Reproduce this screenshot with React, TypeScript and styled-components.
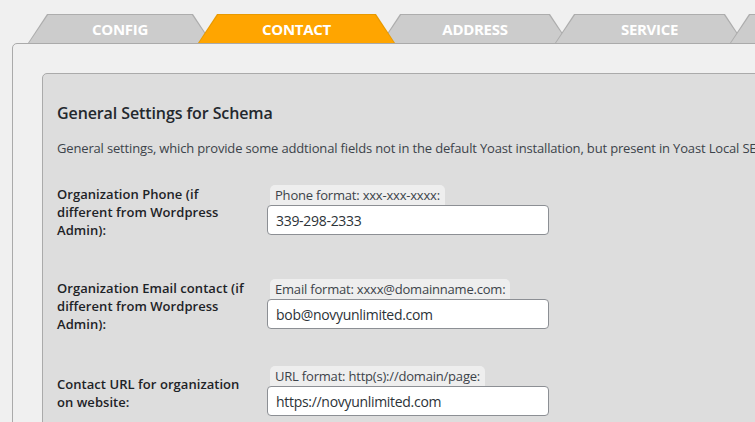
import React from "react";
import styled, { createGlobalStyle } from "styled-components";

const Global = createGlobalStyle`
  html, body { margin: 0; padding: 0; background: #f0f0f0; overflow: hidden; }
  body { font-family: "Open Sans", "Noto Sans", sans-serif; color: #1d2327; }
  * { box-sizing: border-box; }
`;

const Page = styled.div`
  width: 755px;
  height: 422px;
  overflow: hidden;
  padding: 14px 0 0 12px;
`;

const TabBar = styled.div`
  display: flex;
  padding-left: 16px;
  height: 29px;
`;

const Tab = styled.div<{ $w: number; $active?: boolean }>`
  position: relative;
  z-index: ${(p) => (p.$active ? 5 : 1)};
  flex: none;
  width: ${(p) => p.$w}px;
  height: 29px;
  margin-left: -14px;
  &:first-child { margin-left: 0; }
  display: flex;
  align-items: center;
  justify-content: center;
  padding-top: 1px;
  font-family: "Open Sans", sans-serif;
  font-weight: 700;
  font-size: 15px;
  letter-spacing: -0.3px;
  color: #ffffff;
  &::before, &::after {
    content: "";
    position: absolute;
    z-index: -1;
    clip-path: polygon(0 100%, 19px 0, calc(100% - 19px) 0, 100% 100%);
  }
  &::before {
    inset: 0;
    background: ${(p) => (p.$active ? "#e89a00" : "#adadad")};
  }
  &::after {
    top: 1px;
    bottom: 0;
    left: 1px;
    right: 1px;
    background: ${(p) => (p.$active ? "#ffa500" : "#cccccc")};
  }
`;

const Panel = styled.div`
  width: 900px;
  height: 420px;
  background: #f0f0f0;
  border: 1px solid #aaaaaa;
  border-radius: 5px 0 0 0;
  padding: 29px 0 0 29px;
`;

const Box = styled.div`
  width: 860px;
  height: 400px;
  background: #dddddd;
  border: 1px solid #aaaaaa;
  border-radius: 5px 0 0 0;
  padding: 29px 15px 0 14px;
`;

const Heading = styled.h3`
  margin: 0;
  font-size: 16px;
  line-height: 20px;
  font-weight: 600;
  letter-spacing: -0.1px;
  color: #23282d;
`;

const Description = styled.p`
  margin: 16px 0 0;
  font-size: 13px;
  line-height: 18px;
  letter-spacing: -0.16px;
  color: #3c434a;
  white-space: nowrap;
`;

const Form = styled.div`
  display: flex;
  flex-direction: column;
  margin-top: 28px;
`;

const Row = styled.div<{ $space: number }>`
  display: grid;
  grid-template-columns: 210px 282px;
  align-items: center;
  margin-top: ${(p) => p.$space}px;
`;

const Label = styled.label`
  display: block;
  width: 195px;
  font-size: 13px;
  line-height: 18px;
  font-weight: 600;
  letter-spacing: 0.05px;
  color: #1d2327;
`;

const Cell = styled.div`
  display: flex;
  flex-direction: column;
  align-items: flex-start;
  padding-bottom: 4px;
`;

const Hint = styled.span`
  margin-left: 3px;
  height: 20px;
  padding: 0 5px;
  background: #eeeeee;
  border-radius: 5px 5px 0 0;
  font-size: 13px;
  line-height: 21px;
  letter-spacing: -0.2px;
  color: #3c434a;
  white-space: nowrap;
`;

const Input = styled.input`
  width: 282px;
  height: 30px;
  margin: 0;
  padding: 0 8px;
  background: #ffffff;
  border: 1px solid #8c8f94;
  border-radius: 4px;
  font-family: "Open Sans", sans-serif;
  font-size: 14px;
  letter-spacing: -0.3px;
  color: #2c3338;
  outline: none;
`;

const tabs = [
  { id: "config", label: "CONFIG", w: 184 },
  { id: "contact", label: "CONTACT", w: 197, active: true },
  { id: "address", label: "ADDRESS", w: 188 },
  { id: "service", label: "SERVICE", w: 189 },
  { id: "more", label: "", w: 188 },
];

const fields = [
  {
    label: "Organization Phone (if different from Wordpress Admin):",
    hint: "Phone format: xxx-xxx-xxxx:",
    value: "339-298-2333",
    space: 0,
  },
  {
    label: "Organization Email contact (if different from Wordpress Admin):",
    hint: "Email format: xxxx@domainname.com:",
    value: "bob@novyunlimited.com",
    space: 40,
  },
  {
    label: "Contact URL for organization on website:",
    hint: "URL format: http(s)://domain/page:",
    value: "https://novyunlimited.com",
    space: 33,
  },
];

export default function App() {
  return (
    <>
      <Global />
      <Page>
        <TabBar>
          {tabs.map((t) => (
            <Tab key={t.id} $w={t.w} $active={t.active}>
              {t.label}
            </Tab>
          ))}
        </TabBar>
        <Panel>
          <Box>
            <Heading>General Settings for Schema</Heading>
            <Description>
              General settings, which provide some addtional fields not in the default Yoast
              installation, but present in Yoast Local SEO
            </Description>
            <Form>
              {fields.map((f) => (
                <Row key={f.hint} $space={f.space}>
                  <Label>{f.label}</Label>
                  <Cell>
                    <Hint>{f.hint}</Hint>
                    <Input defaultValue={f.value} readOnly />
                  </Cell>
                </Row>
              ))}
            </Form>
          </Box>
        </Panel>
      </Page>
    </>
  );
}
